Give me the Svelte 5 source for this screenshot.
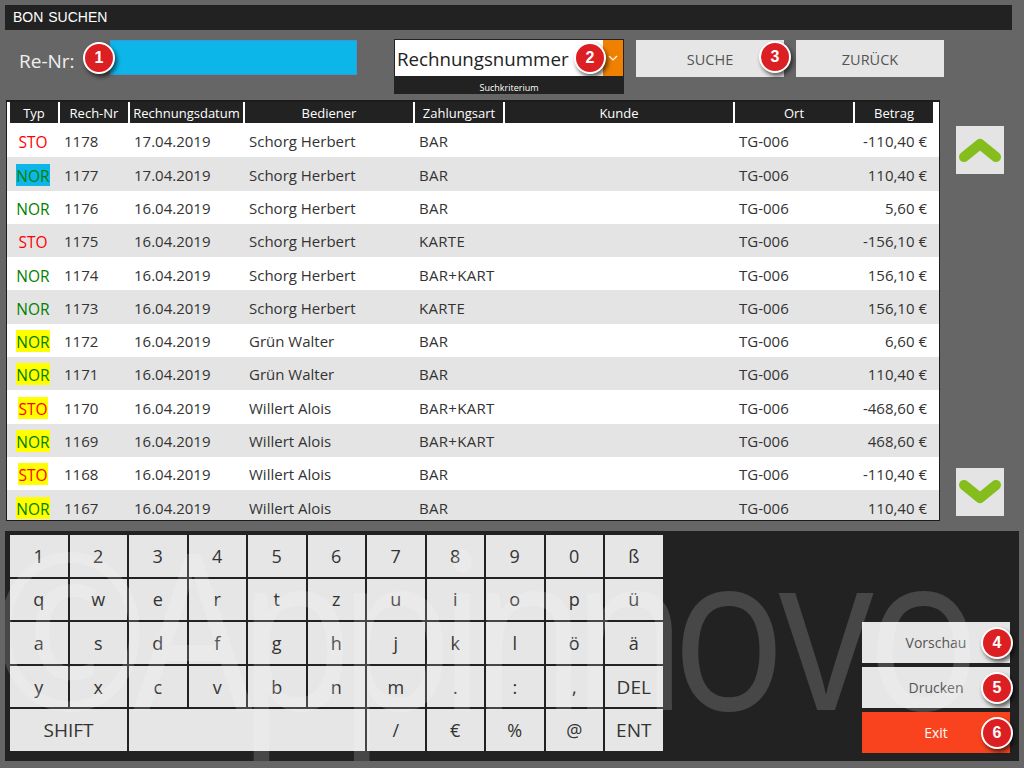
<script>
  const columns = [
    { label: 'Typ', width: 48 },
    { label: 'Rech-Nr', width: 68 },
    { label: 'Rechnungsdatum', width: 113 },
    { label: 'Bediener', width: 168 },
    { label: 'Zahlungsart', width: 88 },
    { label: 'Kunde', width: 228 },
    { label: 'Ort', width: 118 },
    { label: 'Betrag', width: 78 }
  ]

  const rows = [
    ['STO', '1178', '17.04.2019', 'Schorg Herbert', 'BAR', '-110,40 €', ''],
    ['NOR', '1177', '17.04.2019', 'Schorg Herbert', 'BAR', '110,40 €', 'blue'],
    ['NOR', '1176', '16.04.2019', 'Schorg Herbert', 'BAR', '5,60 €', ''],
    ['STO', '1175', '16.04.2019', 'Schorg Herbert', 'KARTE', '-156,10 €', ''],
    ['NOR', '1174', '16.04.2019', 'Schorg Herbert', 'BAR+KART', '156,10 €', ''],
    ['NOR', '1173', '16.04.2019', 'Schorg Herbert', 'KARTE', '156,10 €', ''],
    ['NOR', '1172', '16.04.2019', 'Grün Walter', 'BAR', '6,60 €', 'yellow'],
    ['NOR', '1171', '16.04.2019', 'Grün Walter', 'BAR', '110,40 €', 'yellow'],
    ['STO', '1170', '16.04.2019', 'Willert Alois', 'BAR+KART', '-468,60 €', 'yellow'],
    ['NOR', '1169', '16.04.2019', 'Willert Alois', 'BAR+KART', '468,60 €', 'yellow'],
    ['STO', '1168', '16.04.2019', 'Willert Alois', 'BAR', '-110,40 €', 'yellow'],
    ['NOR', '1167', '16.04.2019', 'Willert Alois', 'BAR', '110,40 €', 'yellow']
  ]

  const keys = [
    ...'1234567890ß', ...'qwertzuiopü', ...'asdfghjklöä',
    'y', 'x', 'c', 'v', 'b', 'n', 'm', '.', ':', ',', 'DEL'
  ]
  const lastRow = ['/', '€', '%', '@', 'ENT']
</script>

<div class="screen">
  <div class="title">BON SUCHEN</div>

  <div class="search">
    <span class="re-label">Re-Nr:</span>
    <div class="re-input"><span class="badge b1">1</span></div>
    <div class="select">
      <div class="select-top">
        <span class="select-value">Rechnungsnummer</span>
        <span class="select-arrow">
          <svg width="10" height="6" viewBox="0 0 10 6"><path d="M1 1l4 4 4-4" fill="none" stroke="#fff" stroke-width="1.2" /></svg>
        </span>
        <span class="badge b2">2</span>
      </div>
      <div class="select-caption">Suchkriterium</div>
    </div>
    <button class="btn top-btn">SUCHE<span class="badge b3">3</span></button>
    <button class="btn top-btn">ZURÜCK</button>
  </div>

  <div class="middle">
    <div class="table">
      <div class="thead">
        {#each columns as c}
          <div class="th" style="width: {c.width}px">{c.label}</div>
        {/each}
      </div>
      <div class="tbody">
        {#each rows as r, i}
          <div class="tr" class:alt={i % 2 === 1}>
            <div class="td typ"><span class="tag {r[0].toLowerCase()} {r[6]}">{r[0]}</span></div>
            <div class="td nr">{r[1]}</div>
            <div class="td date">{r[2]}</div>
            <div class="td user">{r[3]}</div>
            <div class="td pay">{r[4]}</div>
            <div class="td customer"></div>
            <div class="td place">TG-006</div>
            <div class="td sum">{r[5]}</div>
          </div>
        {/each}
      </div>
    </div>
    <div class="scroll">
      <button class="arrow" aria-label="hoch">
        <svg width="48" height="48" viewBox="0 0 48 48"><path d="M8 31L24 18l16 13" fill="none" stroke="#84bd1c" stroke-width="10" stroke-linecap="round" stroke-linejoin="round" /></svg>
      </button>
      <button class="arrow" aria-label="runter">
        <svg width="48" height="48" viewBox="0 0 48 48"><path d="M8 17l16 13 16-13" fill="none" stroke="#84bd1c" stroke-width="10" stroke-linecap="round" stroke-linejoin="round" /></svg>
      </button>
    </div>
  </div>

  <div class="panel">
    <div class="keyboard">
      {#each keys as k}
        <button class="key" class:big={k === 'DEL'}>{k}</button>
      {/each}
      <button class="key shift">SHIFT</button>
      <button class="key space" aria-label="Leertaste"></button>
      {#each lastRow as k}
        <button class="key" class:big={k === 'ENT'}>{k}</button>
      {/each}
    </div>
    <div class="actions">
      <button class="btn action">Vorschau<span class="badge side">4</span></button>
      <button class="btn action">Drucken<span class="badge side">5</span></button>
      <button class="btn action exit">Exit<span class="badge side">6</span></button>
    </div>
    <div class="watermark">©Appinn<span class="wm-end">ovo</span></div>
  </div>
</div>

<style>
  :global(body) {
    background: #666;
  }

  .screen {
    width: 1024px;
    height: 768px;
    background: #666;
    overflow: hidden;
    font-family: 'Open Sans', 'Noto Sans', sans-serif;
    color: #333;
    display: flex;
    flex-direction: column;
  }

  button {
    font-family: inherit;
    color: inherit;
    border: 0;
    padding: 0;
    margin: 0;
  }

  .title {
    margin: 5px 12px 0 5px;
    height: 25px;
    line-height: 25px;
    padding-left: 8px;
    background: #222;
    color: #fff;
    font-family: 'Liberation Sans', sans-serif;
    font-size: 14px;
    word-spacing: 1px;
  }

  .search {
    height: 70px;
    display: flex;
    align-items: flex-start;
    padding-top: 9px;
    box-sizing: border-box;
    margin-left: 19px;
  }
  .re-label {
    width: 91px;
    font-size: 19px;
    line-height: 44px;
    color: #f0f0f0;
  }
  .re-input {
    position: relative;
    width: 247px;
    height: 35px;
    margin-top: 1px;
    box-sizing: border-box;
    background: #0cb6e8;
    border: 1px solid #3a96dd;
  }
  .select {
    width: 230px;
    height: 55px;
    margin-left: 37px;
    background: #222;
    box-sizing: border-box;
    padding: 1px;
  }
  .select-top {
    position: relative;
    height: 36px;
    display: flex;
    background: #fff;
    color: #222;
  }
  .select-value {
    flex: 1;
    font-size: 18.7px;
    line-height: 38px;
    padding-left: 2px;
    white-space: nowrap;
  }
  .select-arrow {
    width: 20px;
    background: #f08000;
    display: flex;
    align-items: center;
    justify-content: center;
  }
  .select-caption {
    text-align: center;
    color: #fff;
    font-size: 9px;
    line-height: 23px;
  }
  .top-btn {
    position: relative;
    width: 148px;
    height: 37px;
    margin-left: 12px;
    margin-top: 1px;
    padding-top: 1px;
    font-size: 14.5px;
  }
  .btn {
    background: #e6e6e6;
    color: #555;
  }

  .middle {
    height: 431px;
    display: flex;
  }
  .table {
    width: 934px;
    height: 421px;
    margin-left: 6px;
    box-sizing: border-box;
    border: 1px solid #1c1c1c;
    border-top-width: 2px;
    background: #fff;
    overflow: hidden;
  }
  .thead {
    display: flex;
    gap: 2px;
    height: 21px;
    padding-left: 3px;
    margin-bottom: 1px;
  }
  .th {
    background: #222;
    color: #fff;
    font-size: 13px;
    line-height: 23px;
    text-align: center;
    white-space: nowrap;
  }
  .tr {
    height: 33.3px;
    display: flex;
    align-items: center;
    font-size: 15px;
    padding-top: 1.5px;
    box-sizing: border-box;
  }
  .tr.alt {
    background: #e4e4e4;
  }
  .td {
    white-space: nowrap;
    box-sizing: border-box;
  }
  .typ { width: 52px; text-align: center; }
  .nr { width: 70px; padding-left: 5px; }
  .date { width: 115px; padding-left: 5px; }
  .user { width: 170px; padding-left: 5px; }
  .pay { width: 90px; padding-left: 5px; letter-spacing: 0.3px; }
  .customer { width: 230px; }
  .place { width: 120px; padding-left: 5px; }
  .sum { width: 73px; text-align: right; }

  .tag {
    display: block;
    width: fit-content;
    margin: 0 auto;
    padding-top: 2px;
    font-size: 15.5px;
    line-height: 20px;
  }
  .sto { color: #f00; }
  .nor { color: #008000; }
  .tag.yellow { background: #ff0; }
  .tag.blue { background: #0cb6e8; }

  .scroll {
    width: 84px;
    height: 421px;
    box-sizing: border-box;
    padding: 26px 0 5px 16px;
    display: flex;
    flex-direction: column;
    justify-content: space-between;
  }
  .arrow {
    width: 48px;
    height: 48px;
    background: #e4e4e4;
    display: flex;
    align-items: center;
    justify-content: center;
  }

  .panel {
    position: relative;
    margin: 0 5px 0 5px;
    height: 230px;
    background: #222;
    overflow: hidden;
  }
  .keyboard {
    position: absolute;
    top: 4px;
    left: 5px;
    display: grid;
    grid-template-columns: repeat(11, 57.5px);
    grid-auto-rows: 41.6px;
    gap: 2px;
  }
  .key {
    background: #e6e6e6;
    font-size: 18px;
    color: #333;
  }
  .key.big {
    font-size: 19px;
  }
  .key.shift {
    grid-column: span 2;
    font-size: 19px;
  }
  .key.space {
    grid-column: span 4;
  }

  .actions {
    position: absolute;
    top: 91px;
    right: 9px;
    width: 148px;
    display: flex;
    flex-direction: column;
    gap: 4px;
  }
  .action {
    position: relative;
    height: 41px;
    font-size: 14px;
  }
  .exit {
    background: #f9431f;
    color: #fff;
  }

  .watermark {
    position: absolute;
    top: -20px;
    left: -14px;
    font-size: 218px;
    line-height: 230px;
    letter-spacing: -18px;
    white-space: nowrap;
    color: rgba(255, 255, 255, 0.17);
    pointer-events: none;
    transform: scaleX(0.87);
    transform-origin: left center;
  }
  .wm-end {
    letter-spacing: -8px;
  }

  .badge {
    position: absolute;
    width: 28px;
    height: 28px;
    box-sizing: content-box;
    border: 2px solid #fff;
    border-radius: 50%;
    background: #dc1f22;
    color: #fff;
    font-family: 'Liberation Sans', sans-serif;
    font-size: 16px;
    font-weight: 700;
    line-height: 28px;
    text-align: center;
    box-shadow: 2px 3px 4px rgba(0, 0, 0, 0.6);
    z-index: 2;
  }
  .b1 { left: -28px; top: 1px; }
  .b2 { right: 17px; top: 2px; }
  .b3 { right: -7px; top: 1px; }
  .side { right: -3px; top: 5px; }
</style>
